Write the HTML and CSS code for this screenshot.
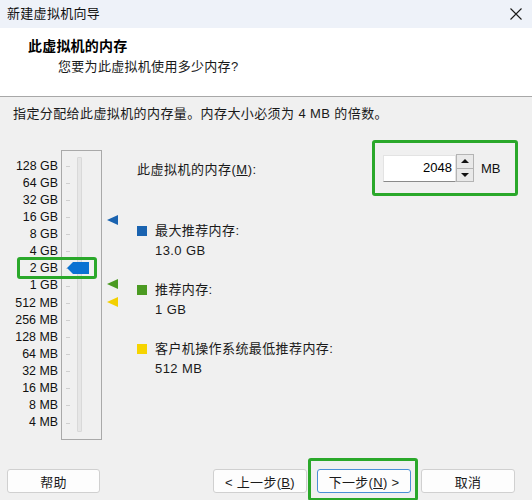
FILE: index.html
```html
<!DOCTYPE html>
<html lang="zh-CN">
<head>
<meta charset="utf-8">
<title>新建虚拟机向导</title>
<link rel="stylesheet" href="styles.css">
</head>
<body>
<div class="window">
  <div class="titlebar">
    <span class="title">新建虚拟机向导</span>
    <svg class="close" width="12" height="12" viewBox="0 0 12 12"><path d="M0.5 0.5 L11.5 11.5 M11.5 0.5 L0.5 11.5" stroke="#1a1a1a" stroke-width="1.1" fill="none"/></svg>
  </div>
  <div class="header">
    <div class="h-title">此虚拟机的内存</div>
    <div class="h-sub">您要为此虚拟机使用多少内存?</div>
  </div>
  <div class="content">
    <p class="intro">指定分配给此虚拟机的内存量。内存大小必须为 4 MB 的倍数。</p>
    <div class="main">
      <div class="scale">
        <span>128 GB</span><span>64 GB</span><span>32 GB</span><span>16 GB</span>
        <span>8 GB</span><span>4 GB</span><span>2 GB</span><span>1 GB</span>
        <span>512 MB</span><span>256 MB</span><span>128 MB</span><span>64 MB</span>
        <span>32 MB</span><span>16 MB</span><span>8 MB</span><span>4 MB</span>
      </div>
      <div class="slider">
        <div class="ticks">
          <i></i><i></i><i></i><i></i><i></i><i></i><i></i><i></i>
          <i></i><i></i><i></i><i></i><i></i><i></i><i></i><i></i>
        </div>
        <div class="track"></div>
        <svg class="thumb" width="22" height="12" viewBox="0 0 22 12"><polygon points="0,6 6,0 22,0 22,12 6,12" fill="#0a72d2"/></svg>
      </div>
      <div class="markers">
        <span class="tri tri-blue"></span>
        <span class="tri tri-green"></span>
        <span class="tri tri-yellow"></span>
      </div>
      <div class="panel">
        <div class="mem-row">
          <span class="mem-label">此虚拟机的内存(<u>M</u>):</span>
          <div class="spin-box">
            <div class="spin-input">2048</div>
            <div class="spin-btns">
              <span class="spin-up"></span>
              <span class="spin-down"></span>
            </div>
            <span class="unit">MB</span>
          </div>
        </div>
        <div class="legend">
          <div class="item">
            <span class="sq sq-blue"></span>
            <div class="item-text"><div>最大推荐内存:</div><div>13.0 GB</div></div>
          </div>
          <div class="item">
            <span class="sq sq-green"></span>
            <div class="item-text"><div>推荐内存:</div><div>1 GB</div></div>
          </div>
          <div class="item">
            <span class="sq sq-yellow"></span>
            <div class="item-text"><div>客户机操作系统最低推荐内存:</div><div>512 MB</div></div>
          </div>
        </div>
      </div>
      <div class="hl hl-thumb"></div>
    </div>
    <div class="footer">
      <button class="btn btn-help">帮助</button>
      <button class="btn btn-back">&lt; 上一步(<u>B</u>)</button>
      <button class="btn btn-next">下一步(<u>N</u>) &gt;</button>
      <button class="btn">取消</button>
      <div class="hl hl-next"></div>
    </div>
  </div>
</div>
</body>
</html>
```
FILE: styles.css
```css
* { box-sizing: border-box; }
html, body {
  margin: 0;
  padding: 0;
  width: 532px;
  height: 500px;
  overflow: hidden;
}
body {
  font-family: "Liberation Sans", "Noto Sans CJK SC", sans-serif;
  font-size: 13px;
  color: #1a1a1a;
  background: #f0f0f0;
}
.window {
  width: 532px;
  height: 500px;
  display: flex;
  flex-direction: column;
}
.titlebar {
  height: 28px;
  background: #eef2f9;
  display: flex;
  align-items: center;
  justify-content: space-between;
  padding: 0 10px 3px 7px;
}
.title {
  font-size: 13px;
  letter-spacing: 0.3px;
  color: #111;
}
.close { margin-top: 3px; }
.header {
  height: 69px;
  background: #fff;
  border-bottom: 1px solid #a8a8a8;
  padding: 8px 0 0 28px;
}
.h-title {
  font-weight: bold;
  font-size: 14px;
  line-height: 20px;
  letter-spacing: 0.2px;
  color: #000;
}
.h-sub {
  margin: 1px 0 0 30px;
  line-height: 20px;
  letter-spacing: 0.3px;
}
.content {
  flex: 1;
  display: flex;
  flex-direction: column;
}
.intro {
  margin: 7px 0 0 13px;
  line-height: 20px;
  letter-spacing: 0.4px;
}
.main {
  position: relative;
  display: flex;
  margin-top: 16px;
  height: 300px;
  padding: 0 14px 0 13px;
}
.scale {
  width: 45px;
  margin-top: 10px;
  padding-top: 7.6px;
  display: flex;
  flex-direction: column;
  align-items: flex-end;
  font-size: 12.4px;
  color: #111;
}
.scale span {
  height: 17.13px;
  line-height: 17.13px;
  white-space: nowrap;
}
.slider {
  position: relative;
  margin: 10px 0 0 3px;
  width: 41px;
  height: 290px;
  border: 1px solid #a9a9a9;
  display: flex;
  padding-left: 4px;
}
.ticks {
  width: 4px;
  padding-top: 6.6px;
  display: flex;
  flex-direction: column;
}
.ticks i {
  height: 17.13px;
  display: flex;
  align-items: center;
}
.ticks i::before {
  content: "";
  display: block;
  width: 4px;
  height: 1px;
  background: #cfcfcf;
}
.track {
  width: 5px;
  margin: 6px 0 7px 7px;
  background: #e6e6e6;
  border: 1px solid #d9d9d9;
  border-radius: 1px;
}
.thumb {
  position: absolute;
  left: 5px;
  top: 111px;
}
.markers {
  position: relative;
  width: 35px;
}
.tri {
  position: absolute;
  left: 5px;
  width: 0;
  height: 0;
  border-top: 5px solid transparent;
  border-bottom: 5px solid transparent;
  border-right: 11px solid #1a63b0;
}
.tri-blue { top: 75px; border-right-color: #1a63b0; }
.tri-green { top: 139px; border-right-color: #4b9a22; }
.tri-yellow { top: 157px; border-right-color: #f3d000; }
.panel {
  flex: 1;
  display: flex;
  flex-direction: column;
}
.mem-row {
  height: 56px;
  display: flex;
  align-items: center;
  justify-content: space-between;
}
.mem-label {
  letter-spacing: 0.5px;
}
.spin-box {
  width: 146px;
  height: 56px;
  border: 3px solid #2aa82a;
  border-radius: 3px;
  display: flex;
  align-items: center;
  padding-left: 8px;
}
.spin-input {
  width: 73px;
  height: 27px;
  background: #fff;
  border: 1px solid #e3e3e3;
  border-bottom-color: #8a8a8a;
  text-align: right;
  padding-right: 3px;
  line-height: 24px;
  font-size: 13px;
  color: #000;
}
.spin-btns {
  width: 18px;
  height: 28px;
  display: flex;
  flex-direction: column;
}
.spin-btns span {
  flex: 1;
  background: #e9e9e9;
  border: 1px solid #b4b4b4;
  display: flex;
  align-items: center;
  justify-content: center;
}
.spin-up { border-bottom-width: 0 !important; }
.spin-up::before, .spin-down::before {
  content: "";
  width: 0;
  height: 0;
  border-left: 4px solid transparent;
  border-right: 4px solid transparent;
}
.spin-up::before { border-bottom: 4px solid #111; }
.spin-down::before { border-top: 4px solid #111; }
.unit {
  margin-left: 7px;
  color: #111;
}
.legend {
  margin-top: 25px;
  display: flex;
  flex-direction: column;
  gap: 19px;
}
.item {
  display: flex;
  align-items: flex-start;
}
.sq {
  width: 10px;
  height: 10px;
  margin: 5px 8px 0 0;
}
.sq-blue { background: #1a63b0; }
.sq-green { background: #4b9a22; }
.sq-yellow { background: #f6d400; }
.item-text div {
  line-height: 20px;
  letter-spacing: 0.4px;
}
.hl {
  position: absolute;
  border: 3px solid #2aa82a;
  border-radius: 3px;
}
.hl-thumb {
  left: 17px;
  top: 117px;
  width: 80px;
  height: 22px;
}
.footer {
  position: relative;
  display: flex;
  margin-top: 29px;
  padding: 0 17px 0 7px;
  gap: 10px;
}
.btn {
  width: 94px;
  height: 24px;
  background: #fdfdfd;
  border: 1px solid #d0d0d0;
  border-radius: 3px;
  font-family: "Liberation Sans", "Noto Sans CJK SC", sans-serif;
  font-size: 13px;
  color: #1b1b1b;
  padding: 0;
  letter-spacing: 0.3px;
}
.btn-help { width: 93px; margin-right: auto; }
.btn-next { border-color: #4a8fd6; }
.hl-next {
  left: 308px;
  top: -11px;
  width: 110px;
  height: 43px;
}
```
